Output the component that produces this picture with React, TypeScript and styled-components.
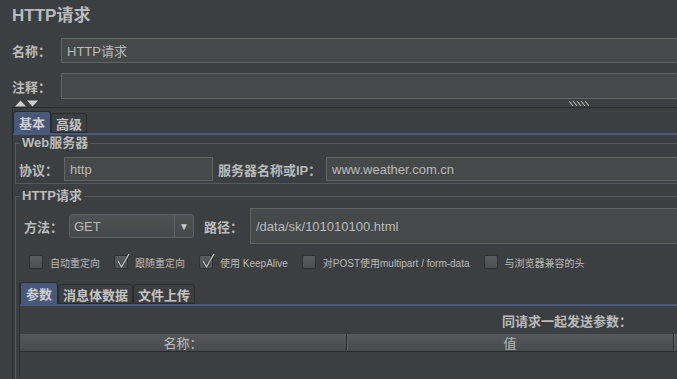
import React from 'react';
import styled, { createGlobalStyle } from 'styled-components';

const FONT = `"Liberation Sans", "Noto Sans CJK SC", sans-serif`;

const GlobalStyle = createGlobalStyle`
  html, body {
    margin: 0;
    padding: 0;
    background: #3c3f41;
    overflow: hidden;
  }
  #root {
    width: 677px;
    height: 379px;
    overflow: hidden;
  }
`;

const Page = styled.div`
  width: 700px;
  height: 379px;
  box-sizing: border-box;
  padding-left: 12px;
  background: #3c3f41;
  color: #bbbbbb;
  font-family: ${FONT};
  font-size: 13px;
  display: flex;
  flex-direction: column;
`;

const Title = styled.div`
  height: 38px;
  box-sizing: border-box;
  padding-top: 6px;
  font-size: 17px;
  font-weight: bold;
  line-height: 20px;
`;

const Row = styled.div<{ $height: number; $top?: number; $left?: number }>`
  display: flex;
  align-items: center;
  height: ${p => p.$height}px;
  margin-top: ${p => p.$top || 0}px;
  padding-left: ${p => p.$left || 0}px;
  flex: none;
`;

const Label = styled.span<{ $width: number; $gap?: number }>`
  width: ${p => p.$width}px;
  margin-left: ${p => p.$gap || 0}px;
  flex: none;
  font-weight: bold;
  font-size: 13px;
  white-space: nowrap;
`;

const TextField = styled.div<{ $width?: number }>`
  ${p => (p.$width ? `width: ${p.$width}px; flex: none;` : 'flex: 1;')}
  height: 100%;
  box-sizing: border-box;
  background: #45494a;
  border: 1px solid #646464;
  padding-left: 5px;
  display: flex;
  align-items: center;
  font-size: 13px;
  color: #bbbbbb;
  white-space: nowrap;
`;

const SplitBar = styled.div`
  height: 8px;
  display: flex;
  align-items: center;
  flex: none;
`;

const Arrows = styled.svg`
  margin-left: 3px;
`;

const Grip = styled.svg`
  margin-left: 531px;
`;

const Panel = styled.div`
  flex: 1;
  border-top: 1px solid #2b2b2b;
  border-left: 1px solid #2b2b2b;
  padding-top: 3px;
  display: flex;
  flex-direction: column;
`;

const TabStrip = styled.div`
  display: flex;
  align-items: flex-end;
  height: 22px;
  flex: none;
`;

const Tab = styled.div<{ $active?: boolean }>`
  height: ${p => (p.$active ? 22 : 20)}px;
  box-sizing: border-box;
  padding: 0 ${p => (p.$active ? 5 : 4)}px;
  display: flex;
  align-items: center;
  font-weight: bold;
  font-size: 13px;
  color: ${p => (p.$active ? '#d0d0d0' : '#c4c4c4')};
  background: ${p => (p.$active ? '#475879' : '#3c3f41')};
  border: 1px solid #2b2b2b;
  border-bottom: ${p => (p.$active ? 'none' : '1px solid #2b2b2b')};
  border-radius: 3px 3px 0 0;
`;

const TabLine = styled.div`
  height: 2px;
  background: #4a5b83;
  flex: none;
`;

const TabBody = styled.div`
  padding-left: 2px;
  display: flex;
  flex-direction: column;
  flex: 1;
`;

const Group = styled.fieldset<{ $top: number; $grow?: boolean }>`
  margin: ${p => p.$top}px 0 0 0;
  padding: 0 0 2px 0;
  border: 1px solid #56595b;
  min-width: 0;
  ${p => (p.$grow ? 'flex: 1; border-bottom: none;' : '')}
  display: flex;
  flex-direction: column;
`;

const Legend = styled.legend`
  margin-left: 4px;
  padding: 0 2px;
  font-weight: bold;
  font-size: 13px;
  line-height: 14px;
  color: #bbbbbb;
`;

const Select = styled.div`
  width: 125px;
  height: 24px;
  box-sizing: border-box;
  flex: none;
  border: 1px solid #5e6162;
  border-radius: 3px;
  background: linear-gradient(#4e5254, #45494a);
  display: flex;
  align-items: stretch;
`;

const SelectValue = styled.span`
  flex: 1;
  padding-left: 4px;
  display: flex;
  align-items: center;
  font-size: 13px;
`;

const SelectArrow = styled.span`
  width: 18px;
  border-left: 1px solid #5e6162;
  display: flex;
  align-items: center;
  justify-content: center;
  font-size: 10px;
  color: #c8c8c8;
`;

const CheckRow = styled.div`
  display: flex;
  align-items: center;
  height: 14px;
  margin-top: 11px;
  padding-left: 13px;
  gap: 14px;
  flex: none;
`;

const CheckItem = styled.label`
  display: flex;
  align-items: center;
  gap: 7px;
  font-size: 10px;
  color: #bbbbbb;
  white-space: nowrap;
`;

const Box = styled.span`
  position: relative;
  width: 14px;
  height: 14px;
  box-sizing: border-box;
  border: 1px solid #2e3031;
  border-radius: 2px;
  background: linear-gradient(#5a5d5f, #4c4f51);
  flex: none;
`;

const Tick = styled.svg`
  position: absolute;
  left: 0;
  top: -4px;
`;

const SubPanel = styled.div`
  margin-top: 13px;
  margin-left: 3px;
  border-left: 1px solid #2b2b2b;
  display: flex;
  flex-direction: column;
  flex: 1;
`;

const ParamsCaption = styled.div`
  height: 28px;
  padding-left: 482px;
  display: flex;
  align-items: center;
  font-weight: bold;
  font-size: 13px;
  white-space: nowrap;
`;

const TableHeader = styled.div`
  display: flex;
  height: 18px;
  box-sizing: border-box;
  background: linear-gradient(#55595c, #484b4e);
  border-bottom: 1px solid #2b2b2b;
`;

const HeaderCell = styled.div<{ $width: number }>`
  width: ${p => p.$width}px;
  box-sizing: border-box;
  border-right: 1px solid #2b2b2b;
  box-shadow: 1px 0 0 #5f6366;
  display: flex;
  align-items: center;
  justify-content: center;
  font-size: 13px;
  color: #bbbbbb;
`;

const Check = ({ checked, label }: { checked?: boolean; label: string }) => (
  <CheckItem>
    <Box>
      {checked && (
        <Tick width="16" height="18" viewBox="0 0 16 18">
          <path d="M3 9 L6.5 15 L14 2" fill="none" stroke="#2e3031" strokeWidth="2.4" />
          <path d="M3 9 L6.5 15 L14 2" fill="none" stroke="#c9c9c9" strokeWidth="1.3" />
        </Tick>
      )}
    </Box>
    {label}
  </CheckItem>
);

export default function App() {
  return (
    <>
      <GlobalStyle />
      <Page>
        <Title>HTTP请求</Title>
        <Row $height={25}>
          <Label $width={49}>名称：</Label>
          <TextField>HTTP请求</TextField>
        </Row>
        <Row $height={26} $top={10}>
          <Label $width={49}>注释：</Label>
          <TextField />
        </Row>
        <SplitBar>
          <Arrows width="23" height="7" viewBox="0 0 23 7">
            <polygon points="0,6.5 5.5,0.5 11,6.5" fill="#cfcfcf" />
            <polygon points="12,0.5 23,0.5 17.5,6.5" fill="#cfcfcf" />
          </Arrows>
          <Grip width="20" height="5" viewBox="0 0 20 5">
            {[0, 4, 8, 12, 16].map(x => (
              <path key={x} d={`M${x} 0 L${x + 4} 5`} stroke="#a9a9a9" strokeWidth="1.2" />
            ))}
          </Grip>
        </SplitBar>
        <Panel>
          <TabStrip>
            <Tab $active>基本</Tab>
            <Tab>高级</Tab>
          </TabStrip>
          <TabLine />
          <TabBody>
            <Group $top={1}>
              <Legend>Web服务器</Legend>
              <Row $height={24} $top={7} $left={3}>
                <Label $width={45}>协议：</Label>
                <TextField $width={149}>http</TextField>
                <Label $width={108} $gap={5}>服务器名称或IP：</Label>
                <TextField>www.weather.com.cn</TextField>
              </Row>
            </Group>
            <Group $top={5} $grow>
              <Legend>HTTP请求</Legend>
              <Row $height={36} $top={5} $left={8}>
                <Label $width={45}>方法：</Label>
                <Select>
                  <SelectValue>GET</SelectValue>
                  <SelectArrow>▼</SelectArrow>
                </Select>
                <Label $width={46} $gap={10}>路径：</Label>
                <TextField>/data/sk/101010100.html</TextField>
              </Row>
              <CheckRow>
                <Check label="自动重定向" />
                <Check checked label="跟随重定向" />
                <Check checked label="使用 KeepAlive" />
                <Check label="对POST使用multipart / form-data" />
                <Check label="与浏览器兼容的头" />
              </CheckRow>
              <SubPanel>
                <TabStrip>
                  <Tab $active>参数</Tab>
                  <Tab>消息体数据</Tab>
                  <Tab>文件上传</Tab>
                </TabStrip>
                <TabLine />
                <ParamsCaption>同请求一起发送参数：</ParamsCaption>
                <TableHeader>
                  <HeaderCell $width={327}>名称：</HeaderCell>
                  <HeaderCell $width={327}>值</HeaderCell>
                </TableHeader>
              </SubPanel>
            </Group>
          </TabBody>
        </Panel>
      </Page>
    </>
  );
}
